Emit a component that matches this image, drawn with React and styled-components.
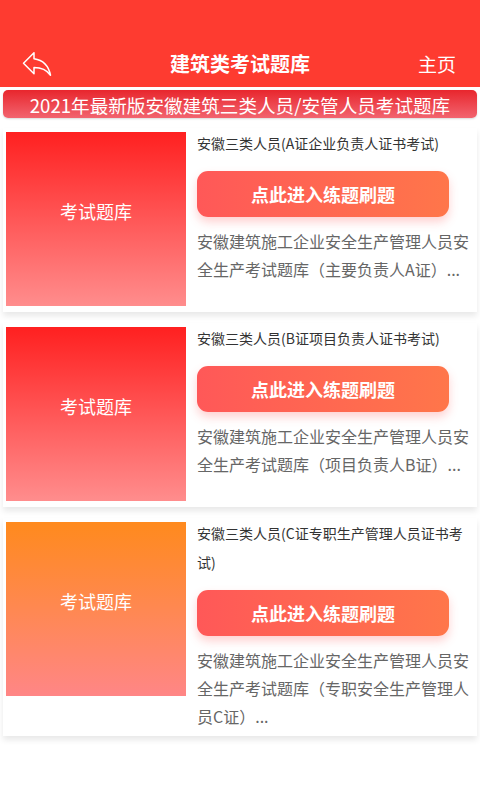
import styled, { createGlobalStyle } from 'styled-components';

const GlobalStyle = createGlobalStyle`
	* {
		box-sizing: border-box;
	}
	body {
		margin: 0;
		background: #ffffff;
		font-family: 'Noto Sans CJK SC', 'Noto Sans', sans-serif;
	}
`;

const Page = styled.div`
	width: 480px;
	min-height: 800px;
	background: #ffffff;
`;

const Header = styled.header`
	background: #fe3b30;
	padding-top: 40px;
`;

const NavBar = styled.div`
	height: 47px;
	display: flex;
	align-items: center;
	justify-content: space-between;
	padding: 0 24px 0 22px;
	position: relative;
`;

const BackButton = styled.button`
	border: 0;
	background: none;
	padding: 0;
	width: 32px;
	height: 28px;
	display: flex;
	align-items: center;
	cursor: pointer;
`;

const NavTitle = styled.h1`
	position: absolute;
	left: 0;
	right: 0;
	margin: 0;
	text-align: center;
	font-size: 20px;
	font-weight: 700;
	color: #ffffff;
	pointer-events: none;
`;

const HomeLink = styled.a`
	font-size: 19px;
	color: #ffffff;
	text-decoration: none;
	cursor: pointer;
`;

const Banner = styled.div`
	margin: 3px 3px 0;
	height: 28px;
	border-radius: 5px;
	background: linear-gradient(#e8262d, #f2646f);
	box-shadow: 0 1px 2px rgba(0, 0, 0, 0.15);
	display: flex;
	align-items: center;
	justify-content: center;
	color: #ffffff;
	font-size: 18.6px;
	white-space: nowrap;
`;

const List = styled.div`
	display: flex;
	flex-direction: column;
	gap: 11px;
	padding-top: 10px;
`;

const Card = styled.div`
	display: flex;
	align-items: flex-start;
	gap: 11px;
	margin: 0 3px;
	padding: 4px 3px 6px;
	background: #ffffff;
	box-shadow: 0 4px 6px rgba(0, 0, 0, 0.09);
`;

const Thumb = styled.div`
	flex: 0 0 180px;
	height: 174px;
	background: ${(p) => p.$bg};
	display: flex;
	align-items: center;
	justify-content: center;
	padding-bottom: 16px;
	color: #ffffff;
	font-size: 18px;
`;

const Body = styled.div`
	flex: 1;
	min-width: 0;
	display: flex;
	flex-direction: column;
	align-items: flex-start;
	margin-top: -3px;
`;

const Title = styled.div`
	font-size: 14px;
	line-height: 29px;
	color: #333333;
`;

const EnterButton = styled.button`
	margin-top: 13px;
	width: 252px;
	height: 46px;
	border: 0;
	border-radius: 11px;
	background: linear-gradient(90deg, #ff5858, #ff764a);
	box-shadow: 0 5px 10px rgba(255, 88, 88, 0.28);
	color: #ffffff;
	font-family: inherit;
	font-size: 18px;
	font-weight: 700;
	cursor: pointer;
`;

const Desc = styled.p`
	margin: 10px 0 0;
	font-size: 16px;
	line-height: 28px;
	color: #666666;
`;

const RED = 'linear-gradient(#ff2020, #ff8d8d)';
const ORANGE = 'linear-gradient(#ff8a1d, #ff8686)';

const items = [
	{
		title: '安徽三类人员(A证企业负责人证书考试)',
		desc: '安徽建筑施工企业安全生产管理人员安全生产考试题库（主要负责人A证）...',
		bg: RED,
	},
	{
		title: '安徽三类人员(B证项目负责人证书考试)',
		desc: '安徽建筑施工企业安全生产管理人员安全生产考试题库（项目负责人B证）...',
		bg: RED,
	},
	{
		title: '安徽三类人员(C证专职生产管理人员证书考试)',
		desc: '安徽建筑施工企业安全生产管理人员安全生产考试题库（专职安全生产管理人员C证）...',
		bg: ORANGE,
	},
];

const BackIcon = () => (
	<svg width="30" height="26" viewBox="2 4 20 17" fill="none">
		<path
			d="M10 9V5l-7 7 7 7v-4.1c5 0 8.5 1.6 11 5.1-1-5-4-10-11-11z"
			stroke="#ffffff"
			strokeWidth="1"
			strokeLinejoin="round"
		/>
	</svg>
);

const App = () => {
	return (
		<Page>
			<GlobalStyle />
			<Header>
				<NavBar>
					<BackButton aria-label="返回">
						<BackIcon />
					</BackButton>
					<NavTitle>建筑类考试题库</NavTitle>
					<HomeLink>主页</HomeLink>
				</NavBar>
			</Header>
			<Banner>2021年最新版安徽建筑三类人员/安管人员考试题库</Banner>
			<List>
				{items.map((item) => (
					<Card key={item.title}>
						<Thumb $bg={item.bg}>考试题库</Thumb>
						<Body>
							<Title>{item.title}</Title>
							<EnterButton>点此进入练题刷题</EnterButton>
							<Desc>{item.desc}</Desc>
						</Body>
					</Card>
				))}
			</List>
		</Page>
	);
};

export default App;
